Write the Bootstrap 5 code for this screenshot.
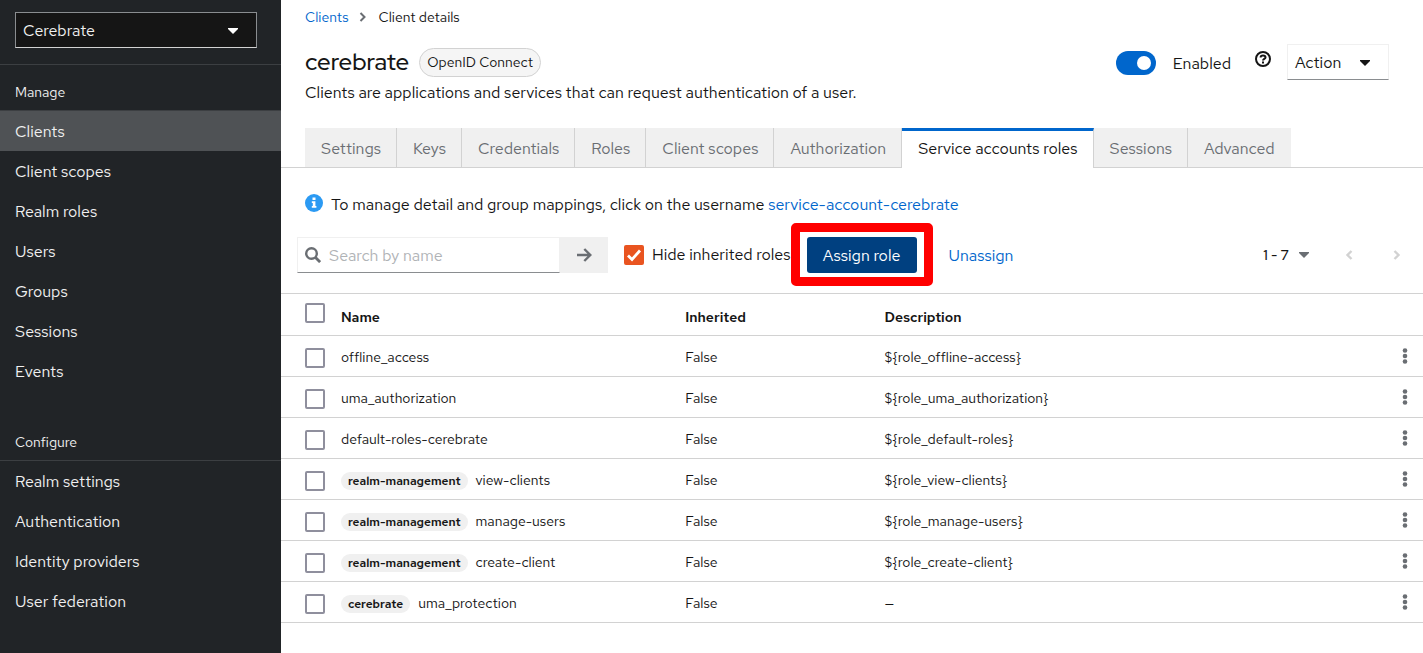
<!DOCTYPE html>
<html lang="en">
<head>
<meta charset="utf-8">
<meta name="viewport" content="width=device-width, initial-scale=1">
<title>Client details</title>
<link rel="stylesheet" href="https://cdn.jsdelivr.net/npm/bootstrap@5.3.0/dist/css/bootstrap.min.css">
<style>
  body { font: 400 16px/24px "Red Hat Text", Lato, sans-serif; color: #151515; background: #fff; }
  a { color: #0066cc; text-decoration: none; }
  .small-text { font-size: 14px; line-height: 20px; }

  /* Sidebar */
  .sidebar { width: 281px; background: #212427; color: #f0f0f0; }
  .realm-box { height: 65px; padding: 12px 24px 0 15px; border-bottom: 1px solid #3c3f42; }
  .realm-btn { height: 36px; padding: 1px 18px 0 7px; background: #151515; color: #f0f0f0; border: 1px solid #8a8d90; border-bottom-color: #d2d2d2; border-radius: 0; font: inherit; }
  .side-title { font-size: 14px; line-height: 20px; font-weight: 400; margin: 0; padding: 17px 15px 8px; border-bottom: 1px solid #3c3f42; }
  .side-nav + .side-title { padding-top: 41px; }
  .side-nav .nav-link { padding: 9px 15px 7px; color: #f0f0f0; }
  .side-nav .nav-link.active { background: #4f5255; }

  /* Page header */
  .page-head { padding: 7px 34px 0 24px; }
  .crumb-arrow { margin: 0 11px; }
  .head-row { margin-top: 17px; }
  .title-group { gap: 10px; }
  .page-title { font-size: 24px; line-height: 32px; font-weight: 500; font-family: "Red Hat Display", "Red Hat Text", Lato, sans-serif; margin: 0; }
  .protocol { height: 29px; line-height: 20px; padding: 3px 7px; border: 1px solid #d2d2d2; border-radius: 15px; background: #f5f5f5; font-size: 14px; }
  .enable-group { gap: 17px; margin-top: 2px; }
  .enable-group label { padding-top: 2px; }
  .form-switch .form-check-input { width: 40px; height: 24px; margin: 0; border: 0; background-color: #0066cc; background-size: 24px; box-shadow: none; }
  .form-switch .form-check-input:checked { background-color: #0066cc; background-image: url("data:image/svg+xml,%3csvg xmlns='http://www.w3.org/2000/svg' viewBox='-12 -12 24 24'%3e%3ccircle r='7' fill='%23fff'/%3e%3c/svg%3e"); }
  .help-btn { margin: 0 16px 6px 24px; }
  .action-btn { width: 102px; height: 36px; padding: 1px 18px 0 7px; background: #fff; color: #151515; border: 1px solid #f0f0f0; border-bottom-color: #8a8d90; border-radius: 0; font: inherit; }
  .lead-in { line-height: 26px; margin: 0; }

  /* Tabs */
  .role-tabs { margin-top: 22px; padding-left: 24px; border-bottom: 1px solid #d2d2d2; }
  .role-tabs .nav-link { height: 39px; padding: 9px 15px 0 16px; border: 0; border-right: 1px solid #d2d2d2; border-radius: 0; margin: 0; background: #f0f0f0; color: #6a6e73; white-space: nowrap; }
  .role-tabs li:last-child .nav-link { border-right: 0; padding-right: 16px; }
  .role-tabs .nav-link.active { height: 40px; margin-bottom: -1px; padding-top: 6px; border-top: 3px solid #0066cc; background: #fff; color: #151515; }

  /* Toolbar */
  .hint { padding: 25px 24px 0; }
  .hint svg { margin-top: 1px; }
  .tools { padding: 20px 18px 20px 16px; }
  .search { width: 311px; height: 36px; }
  .search-field { border: 1px solid #f0f0f0; border-bottom-color: #8a8d90; padding-left: 7px; }
  .search input { border: 0; outline: 0; padding: 1px 8px 0; font: inherit; min-width: 0; }
  .search input::placeholder { color: #b0b3b6; opacity: 1; }
  .search button { width: 48px; border: 0; background: #f0f0f0; }
  .form-check-input.tick[type=checkbox] { width: 20px; height: 20px; margin: 0; border: 2px solid #8f8f9d; border-radius: 2px; background-color: #fff; float: none; }
  .form-check-input.tick[type=checkbox]:checked { border-color: #e95420; background-color: #e95420; background-size: 20px; background-position: center;
    background-image: url("data:image/svg+xml,%3csvg xmlns='http://www.w3.org/2000/svg' viewBox='0 0 20 20'%3e%3cpath d='M4 10.500l4 4 8-9' fill='none' stroke='%23fff' stroke-width='2.800'/%3e%3c/svg%3e"); }
  .assign { position: relative; height: 36px; width: 110px; padding: 1px 0 0; margin-left: 16px; border: 0; border-radius: 3px; background: #004080; color: #fff; font: inherit; }
  .assign::after { content: ""; position: absolute; inset: -14px -16px -13px; border: 9px solid #f00; border-radius: 5px; }
  .flat { border: 0; background: none; padding: 0; font: inherit; color: inherit; }
  .flat.text-action { color: #0066cc; padding: 1px 16px 0; }
  .range-btn { gap: 10px; }
  .prev-btn { padding: 0 20px; }
  .next-btn { padding-left: 20px; }

  /* Roles table */
  .roles { margin: 0; font-size: 14px; line-height: 20px; table-layout: fixed; border-top: 1px solid #d2d2d2; }
  .roles > :not(caption) > * > * { height: 41px; padding: 2px 0 0; border-bottom: 1px solid #d2d2d2; color: #151515; vertical-align: middle; background: none; box-shadow: none; }
  .roles > thead > tr > th { height: 42px; padding-top: 5px; font-weight: 600; }
  .roles > thead > tr > th:first-child { padding-top: 0; padding-bottom: 4px; }
  .roles tr > :first-child { padding-left: 24px; }
  .roles > tbody > tr > :first-child { padding-top: 4px; }
  .roles > tbody > tr > :last-child { padding: 0 15px 0 0; }
  .roles .tick { display: block; }
  .client-tag { display: inline-block; margin-right: 8px; padding: 0 7px; height: 18px; line-height: 18px; border-radius: 9px; background: #f0f0f0; font-size: 12px; font-weight: 600; }
  .c-tick { width: 60px; } .c-name { width: 30.150%; } .c-inh { width: 17.450%; } .c-act { width: 50px; }
</style>
</head>
<body>
<div class="d-flex min-vh-100">
  <aside class="sidebar flex-shrink-0">
    <div class="realm-box">
      <button class="realm-btn w-100 d-flex align-items-center justify-content-between" type="button">Cerebrate
        <svg width="10" height="6" fill="#fff" aria-hidden="true"><path d="M0 0h10v1L5 6 0 1z"/></svg></button>
    </div>
    <h2 class="side-title">Manage</h2>
    <nav class="side-nav nav flex-column" aria-label="Manage">
      <a class="nav-link active" href="#">Clients</a><a class="nav-link" href="#">Client scopes</a><a class="nav-link" href="#">Realm roles</a><a class="nav-link" href="#">Users</a><a class="nav-link" href="#">Groups</a><a class="nav-link" href="#">Sessions</a><a class="nav-link" href="#">Events</a>
    </nav>
    <h2 class="side-title">Configure</h2>
    <nav class="side-nav nav flex-column" aria-label="Configure">
      <a class="nav-link" href="#">Realm settings</a><a class="nav-link" href="#">Authentication</a><a class="nav-link" href="#">Identity providers</a><a class="nav-link" href="#">User federation</a>
    </nav>
  </aside>

  <main class="flex-grow-1 overflow-hidden">
    <header class="page-head">
      <nav class="small-text d-flex align-items-center" aria-label="Breadcrumb">
        <a href="#">Clients</a>
        <svg class="crumb-arrow" width="8" height="10" fill="none" stroke="#6a6e73" stroke-width="2" aria-hidden="true"><path d="M1.500 1l4 4-4 4"/></svg>
        <span>Client details</span>
      </nav>
      <div class="head-row d-flex align-items-center justify-content-between">
        <div class="title-group d-flex align-items-center">
          <h1 class="page-title">cerebrate</h1>
          <span class="protocol">OpenID Connect</span>
        </div>
        <div class="d-flex align-items-center">
          <div class="form-switch enable-group d-flex align-items-center p-0">
            <input class="form-check-input" type="checkbox" role="switch" id="enabled" checked>
            <label for="enabled">Enabled</label>
          </div>
          <button class="flat help-btn d-flex" type="button" aria-label="Help">
            <svg width="16" height="16" viewBox="0 0 16 16" fill="none" stroke="#151515" stroke-width="2"><circle cx="8" cy="8" r="7"/><path d="M5.600 6.600C5.600 5.200 6.600 4.500 8 4.500s2.500.8 2.500 1.900C10.500 8 8 7.900 8 9.600M8 10.600v1.900"/></svg></button>
          <button class="action-btn d-flex align-items-center justify-content-between" type="button">Action
            <svg width="10" height="6" fill="#151515" aria-hidden="true"><path d="M0 0h10v1L5 6 0 1z"/></svg></button>
        </div>
      </div>
      <p class="lead-in">Clients are applications and services that can request authentication of a user.</p>
    </header>

    <ul class="role-tabs nav flex-nowrap">
      <li><a class="nav-link" href="#">Settings</a></li>
      <li><a class="nav-link" href="#">Keys</a></li>
      <li><a class="nav-link" href="#">Credentials</a></li>
      <li><a class="nav-link" href="#">Roles</a></li>
      <li><a class="nav-link" href="#">Client scopes</a></li>
      <li><a class="nav-link" href="#">Authorization</a></li>
      <li><a class="nav-link active" href="#" aria-current="page">Service accounts roles</a></li>
      <li><a class="nav-link" href="#">Sessions</a></li>
      <li><a class="nav-link" href="#">Advanced</a></li>
    </ul>

    <div class="hint d-flex align-items-start gap-2">
      <svg width="18" height="18" viewBox="0 0 18 18" aria-hidden="true"><circle cx="9" cy="9" r="9" fill="#2b9af3"/><path d="M7.500 3.500h3v2.500h-3zM6.800 7.300h3.600v4.700h1v1.700H6.800V12h1V9h-1z" fill="#fff"/></svg>
      <span>To manage detail and group mappings, click on the username <a href="#">service-account-cerebrate</a></span>
    </div>

    <div class="tools d-flex align-items-center">
      <div class="search d-flex">
        <div class="search-field d-flex align-items-center flex-grow-1">
          <svg width="16" height="16" viewBox="0 0 16 16" fill="none" stroke="#6a6e73" aria-hidden="true"><circle cx="6.500" cy="6.500" r="5.300" stroke-width="2.400"/><path d="M10.500 10.500l4.600 4.600" stroke-width="2.800"/></svg>
          <input class="flex-grow-1" type="text" placeholder="Search by name" aria-label="Search by name">
        </div>
        <button class="d-flex align-items-center justify-content-center" type="button" aria-label="Search"><svg width="15" height="14" viewBox="0 0 15 14" fill="none" stroke="#6a6e73" stroke-width="2.400"><path d="M0 7h13M7.300 1l6 6-6 6"/></svg></button>
      </div>
      <div class="d-flex align-items-center gap-2 ms-3">
        <input class="form-check-input tick" type="checkbox" id="hide" checked>
        <label for="hide">Hide inherited roles</label>
      </div>
      <button class="assign" type="button">Assign role</button>
      <button class="flat text-action ms-3" type="button">Unassign</button>
      <div class="small-text d-flex align-items-center ms-auto pe-1">
        <button class="flat range-btn d-flex align-items-center fw-medium" type="button">1 - 7
          <svg width="10" height="6" fill="#6a6e73" aria-hidden="true"><path d="M0 0h10v1L5 6 0 1z"/></svg></button>
        <button class="flat prev-btn d-flex ms-3" type="button" aria-label="Previous"><svg width="8" height="10" fill="none" stroke="#d2d2d2" stroke-width="2.400"><path d="M6.500 1l-4 4 4 4"/></svg></button>
        <button class="flat next-btn d-flex" type="button" aria-label="Next"><svg width="8" height="10" fill="none" stroke="#d2d2d2" stroke-width="2.400"><path d="M1.500 1l4 4-4 4"/></svg></button>
      </div>
    </div>

    <table class="roles table">
      <colgroup><col class="c-tick"><col class="c-name"><col class="c-inh"><col><col class="c-act"></colgroup>
      <thead><tr><th><input class="form-check-input tick" type="checkbox" aria-label="Select all"></th><th>Name</th><th>Inherited</th><th>Description</th><th></th></tr></thead>
      <tbody id="rows"></tbody>
    </table>
  </main>
</div>
<script src="https://cdn.jsdelivr.net/npm/bootstrap@5.3.0/dist/js/bootstrap.bundle.min.js"></script>
<script>
  const roles = [
    ['', 'offline_access', '${role_offline-access}'],
    ['', 'uma_authorization', '${role_uma_authorization}'],
    ['', 'default-roles-cerebrate', '${role_default-roles}'],
    ['realm-management', 'view-clients', '${role_view-clients}'],
    ['realm-management', 'manage-users', '${role_manage-users}'],
    ['realm-management', 'create-client', '${role_create-client}'],
    ['cerebrate', 'uma_protection', '—']
  ];
  document.getElementById('rows').innerHTML = roles.map(([client, name, text]) => `
    <tr><td><input class="form-check-input tick" type="checkbox" aria-label="Select ${name}"></td>
    <td>${client ? `<span class="client-tag">${client}</span>` : ''}${name}</td><td>False</td><td>${text}</td>
    <td><button class="flat d-block ms-auto" type="button" aria-label="Actions for ${name}"><svg class="d-block" width="6" height="16" fill="#6a6e73"><circle cx="3" cy="2.500" r="2.300"/><circle cx="3" cy="8" r="2.300"/><circle cx="3" cy="13.500" r="2.300"/></svg></button></td></tr>`).join('');
</script>
</body>
</html>
